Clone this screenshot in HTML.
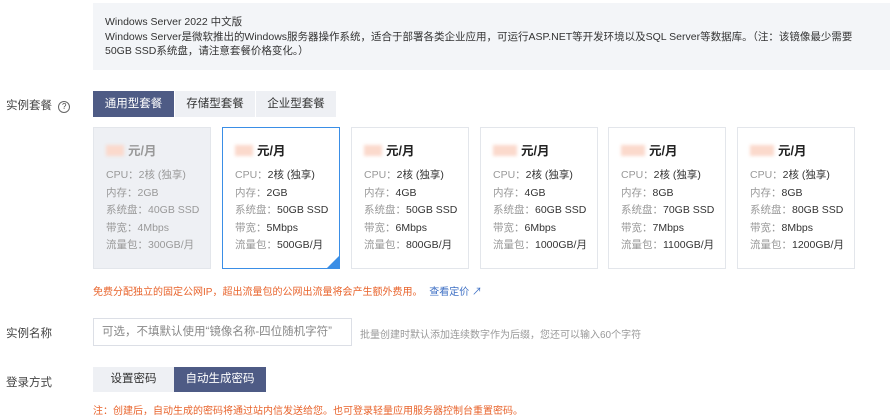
<!DOCTYPE html><html><head><meta charset="utf-8"><style>
body{margin:0;width:893px;height:416px;background:#fff;font-family:"Liberation Sans","Noto Sans CJK SC",sans-serif;font-size:11px;color:#333;position:relative;overflow:hidden}
.a{position:absolute;white-space:nowrap}
.info{left:93px;top:3px;width:797px;height:67px;background:#f3f5f8}
.lab{left:6px;color:#444;font-size:11.5px}
.tab{position:absolute;top:91px;height:26px;line-height:26px;text-align:center;background:#eef0f4;color:#333;font-size:11.5px}
.on{background:#4e5b85;color:#fff}
.card{position:absolute;top:127px;width:118px;height:142px;border:1px solid #e3e6eb;background:#fff;box-sizing:border-box;font-size:10.5px}
.card .p{position:absolute;left:12px;top:12px;font-size:12.5px;font-weight:bold;color:#222}
.card .p i{display:inline-block;width:18px;height:11px;background:#fbd9cc;margin-right:4px;vertical-align:-1px;filter:blur(1.5px)}
.card .l{position:absolute;left:12px;color:#333}
.card .l span{color:#999}
.dis{background:#eef0f4}
.dis .p,.dis .l{color:#999}
.sel{border:1px solid #3a8ee6}
</style></head><body>
<div class="a info"></div>
<div class="a" style="left:105px;top:14px;font-size:10.5px">Windows Server 2022 中文版</div>
<div class="a" style="left:105px;top:30px;line-height:14px;white-space:normal;width:765px;font-size:10.5px">Windows Server是微软推出的Windows服务器操作系统，适合于部署各类企业应用，可运行ASP.NET等开发环境以及SQL Server等数据库。（注：该镜像最少需要50GB SSD系统盘，请注意套餐价格变化。）</div>
<div class="a lab" style="top:97px">实例套餐 <span style="display:inline-block;width:10px;height:10px;border:1px solid #666;border-radius:50%;font-size:8px;line-height:10px;text-align:center;margin-left:3px">?</span></div>
<div class="tab on" style="left:93px;width:81px">通用型套餐</div>
<div class="tab" style="left:175px;width:80px">存储型套餐</div>
<div class="tab" style="left:256px;width:80px">企业型套餐</div>

<div class="card dis" style="left:93px"><div class="p"><i></i>元/月</div><div class="l" style="top:39px">CPU：2核 (独享)</div><div class="l" style="top:57px">内存：2GB</div><div class="l" style="top:74px">系统盘：40GB SSD</div><div class="l" style="top:92px">带宽：4Mbps</div><div class="l" style="top:109px">流量包：300GB/月</div></div>
<div class="card sel" style="left:222px"><div class="p"><i></i>元/月</div><div class="l" style="top:39px"><span>CPU：</span>2核 (独享)</div><div class="l" style="top:57px"><span>内存：</span>2GB</div><div class="l" style="top:74px"><span>系统盘：</span>50GB SSD</div><div class="l" style="top:92px"><span>带宽：</span>5Mbps</div><div class="l" style="top:109px"><span>流量包：</span>500GB/月</div><div style="position:absolute;right:0;bottom:0;width:0;height:0;border-left:12px solid transparent;border-bottom:12px solid #3a8ee6"></div></div>
<div class="card" style="left:351px"><div class="p"><i></i>元/月</div><div class="l" style="top:39px"><span>CPU：</span>2核 (独享)</div><div class="l" style="top:57px"><span>内存：</span>4GB</div><div class="l" style="top:74px"><span>系统盘：</span>50GB SSD</div><div class="l" style="top:92px"><span>带宽：</span>6Mbps</div><div class="l" style="top:109px"><span>流量包：</span>800GB/月</div></div>
<div class="card" style="left:480px"><div class="p"><i style="width:24px"></i>元/月</div><div class="l" style="top:39px"><span>CPU：</span>2核 (独享)</div><div class="l" style="top:57px"><span>内存：</span>4GB</div><div class="l" style="top:74px"><span>系统盘：</span>60GB SSD</div><div class="l" style="top:92px"><span>带宽：</span>6Mbps</div><div class="l" style="top:109px"><span>流量包：</span>1000GB/月</div></div>
<div class="card" style="left:608px"><div class="p"><i style="width:24px"></i>元/月</div><div class="l" style="top:39px"><span>CPU：</span>2核 (独享)</div><div class="l" style="top:57px"><span>内存：</span>8GB</div><div class="l" style="top:74px"><span>系统盘：</span>70GB SSD</div><div class="l" style="top:92px"><span>带宽：</span>7Mbps</div><div class="l" style="top:109px"><span>流量包：</span>1100GB/月</div></div>
<div class="card" style="left:737px"><div class="p"><i style="width:24px"></i>元/月</div><div class="l" style="top:39px"><span>CPU：</span>2核 (独享)</div><div class="l" style="top:57px"><span>内存：</span>8GB</div><div class="l" style="top:74px"><span>系统盘：</span>80GB SSD</div><div class="l" style="top:92px"><span>带宽：</span>8Mbps</div><div class="l" style="top:109px"><span>流量包：</span>1200GB/月</div></div>

<div class="a" style="left:93px;top:283px;color:#e8632b;font-size:10px">免费分配独立的固定公网IP，超出流量包的公网出流量将会产生额外费用。 <span style="color:#3d6fc4;margin-left:4px">查看定价 ↗</span></div>

<div class="a lab" style="top:325px">实例名称</div>
<div class="a" style="left:93px;top:318px;width:259px;height:28px;border:1px solid #dcdfe6;box-sizing:border-box;line-height:26px;padding-left:8px;color:#888;font-size:11.5px">可选，不填默认使用“镜像名称-四位随机字符”</div>
<div class="a" style="left:360px;top:326px;color:#999;font-size:10px">批量创建时默认添加连续数字作为后缀，您还可以输入60个字符</div>

<div class="a lab" style="top:374px">登录方式</div>
<div class="tab" style="left:93px;top:367px;width:81px;height:25px;line-height:25px">设置密码</div>
<div class="tab on" style="left:174px;top:367px;width:92px;height:25px;line-height:25px">自动生成密码</div>
<div class="a" style="left:93px;top:402px;color:#e8632b;font-size:10px">注：创建后，自动生成的密码将通过站内信发送给您。也可登录轻量应用服务器控制台重置密码。</div>
</body></html>
